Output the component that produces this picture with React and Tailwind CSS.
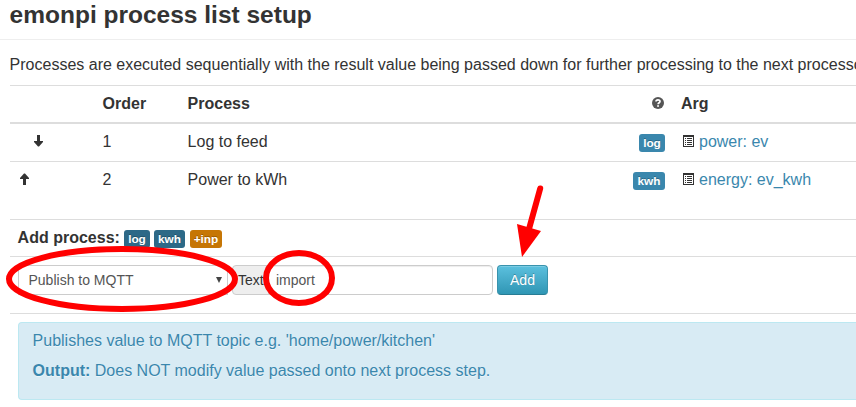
import React from "react";

const shades = {
  info: "bg-[#3a87ad]",
  link: "bg-[#2d6987]",
  warning: "bg-[#c67605]",
};

function Badge({ children, tone, width }) {
  return (
    <span
      className={`inline-flex h-[18px] items-center justify-center rounded-[3px] text-[11.8px] font-bold leading-[14px] text-white [text-shadow:0_-1px_0_rgba(0,0,0,0.25)] ${shades[tone]} ${width}`}
    >
      {children}
    </span>
  );
}

function ArrowIcon({ up }) {
  return (
    <svg width="9" height="12" viewBox="0 0 9 12" className={up ? "rotate-180" : ""} fill="#333">
      <path d="M3 0h3v6h3v1L5 11.5H4L0 7V6h3z" />
    </svg>
  );
}

function ListIcon() {
  return (
    <svg width="11" height="12" viewBox="0 0 11 12" fill="#333" shapeRendering="crispEdges">
      <path fillRule="evenodd" d="M0 0h11v12H0zM1 2v9h9V2z" />
      <path d="M2 3h1v1H2zM4 3h5v1H4zM2 5h1v1H2zM4 5h5v1H4zM2 7h1v1H2zM4 7h5v1H4zM2 9h1v1H2zM4 9h5v1H4z" />
    </svg>
  );
}

function HelpIcon() {
  return (
    <svg width="12" height="12" viewBox="0 0 12 12">
      <circle cx="6" cy="6" r="6" fill="#555" />
      <path d="M4 4.6C4 2.4 8 2.4 8 4.4 8 5.8 6.1 5.6 6.1 7.2" fill="none" stroke="#fff" strokeWidth="1.7" />
      <path d="M5.1 8.2H7v1.6H5.1z" fill="#fff" />
    </svg>
  );
}

const columns = "grid grid-cols-[92.6px_85px_445.4px_48px_1fr]";

function ProcessRow({ up, order, name, tag, tagWidth, arg, height }) {
  return (
    <div className={`${columns} items-start border-t border-[#ddd] pt-[8px] leading-5 ${height}`}>
      <div className={up ? "pl-[10px] pt-[3px]" : "pl-[24px] pt-[3px]"}>
        <ArrowIcon up={up} />
      </div>
      <div>{order}</div>
      <div>{name}</div>
      <div className="flex justify-end pr-4 pt-[2px]">
        <Badge tone="info" width={tagWidth}>{tag}</Badge>
      </div>
      <div className="flex items-start gap-[5px] pl-[2px] text-[#3a87ad]">
        <span className="pt-[3px]"><ListIcon /></span>
        <span>{arg}</span>
      </div>
    </div>
  );
}

function Annotations() {
  return (
    <svg className="pointer-events-none absolute left-0 top-0" width="856" height="407" fill="none" stroke="#f00" strokeWidth="6">
      <ellipse cx="122" cy="279" rx="113" ry="30" />
      <ellipse cx="299" cy="278" rx="33" ry="25" />
      <path d="M540.2 188.5L529 229" strokeLinecap="round" />
      <path d="M517 224l24 7-19 26z" fill="#f00" stroke="none" />
    </svg>
  );
}

export default function App() {
  return (
    <div className="relative h-[407px] w-[856px] overflow-hidden bg-white font-['Liberation_Sans',Arial,sans-serif] text-base text-[#333]">
      <div className="h-10 border-b border-[#eee] pl-[9.6px]">
        <h3 className="text-[24.5px] font-bold leading-[30px]">emonpi process list setup</h3>
      </div>
      <div className="pl-[10px]">
        <p className="-ml-[0.4px] h-[45px] whitespace-nowrap pt-[15px] leading-5">
          Processes are executed sequentially with the result value being passed down for further processing to the next processor
        </p>
        <div className={`${columns} h-[37px] border-t border-[#ddd] pt-[8px] font-bold leading-5`}>
          <div />
          <div>Order</div>
          <div>Process</div>
          <div className="flex justify-end pr-[17px] pt-[3px]"><HelpIcon /></div>
          <div>Arg</div>
        </div>
        <div className="border-t border-[#ddd]">
          <ProcessRow order="1" name="Log to feed" tag="log" tagWidth="w-[26px]" arg="power: ev" height="h-[38px]" />
          <ProcessRow up order="2" name="Power to kWh" tag="kwh" tagWidth="w-[32px]" arg="energy: ev_kwh" height="h-[58px]" />
        </div>
        <div className="flex h-[37px] items-start border-t border-[#ddd] pl-2 pt-2 leading-5">
          <span className="-ml-[0.4px] w-[106.4px] whitespace-nowrap font-bold">Add process:</span>
          <div className="flex gap-1 pt-[2px]">
            <Badge tone="link" width="w-[26px]">log</Badge>
            <Badge tone="link" width="w-[31px]">kwh</Badge>
            <Badge tone="warning" width="ml-px w-[32px]">+inp</Badge>
          </div>
        </div>
        <div className="flex h-[57px] items-start gap-1 border-t border-[#ddd] pl-2 pt-2">
          <div className="flex h-[30px] w-[210px] items-center justify-between border border-[#ccc] bg-white pl-[9.5px] pr-[5px] text-[14px] text-[#555]">
            <span>Publish to MQTT</span>
            <svg width="6" height="6" viewBox="0 0 6 6" fill="#444"><path d="M0 0h6L3 6z" /></svg>
          </div>
          <div className="flex h-[30px] w-[261px] text-[14px]">
            <span className="flex w-[37px] items-center rounded-l border border-[#ccc] bg-[#eee] pl-[5px]">Text</span>
            <span className="-ml-px flex flex-1 items-center rounded-r border border-[#ccc] bg-white pl-[7px] text-[#555] shadow-[inset_0_1px_1px_rgba(0,0,0,0.075)]">import</span>
          </div>
          <button className="h-[30px] w-[51px] rounded border border-[#3993ad] border-b-[#287c94] bg-linear-to-b from-[#5bc0de] to-[#2f96b4] text-[14px] leading-5 text-white shadow-[inset_0_1px_0_rgba(255,255,255,0.2)] [text-shadow:0_-1px_0_rgba(0,0,0,0.25)]">Add</button>
        </div>
        <div className="border-t border-[#ddd] pl-2 pt-2">
          <div className="h-[78px] rounded-l border border-r-0 border-[#bce8f1] bg-[#d8ebf4] pl-[13.6px] pt-2 leading-5 text-[#3a87ad] [text-shadow:0_1px_0_rgba(255,255,255,0.5)]">
            <p className="mb-[10px]">Publishes value to MQTT topic e.g. 'home/power/kitchen'</p>
            <p><b>Output:</b> Does NOT modify value passed onto next process step.</p>
          </div>
        </div>
      </div>
      <Annotations />
    </div>
  );
}
